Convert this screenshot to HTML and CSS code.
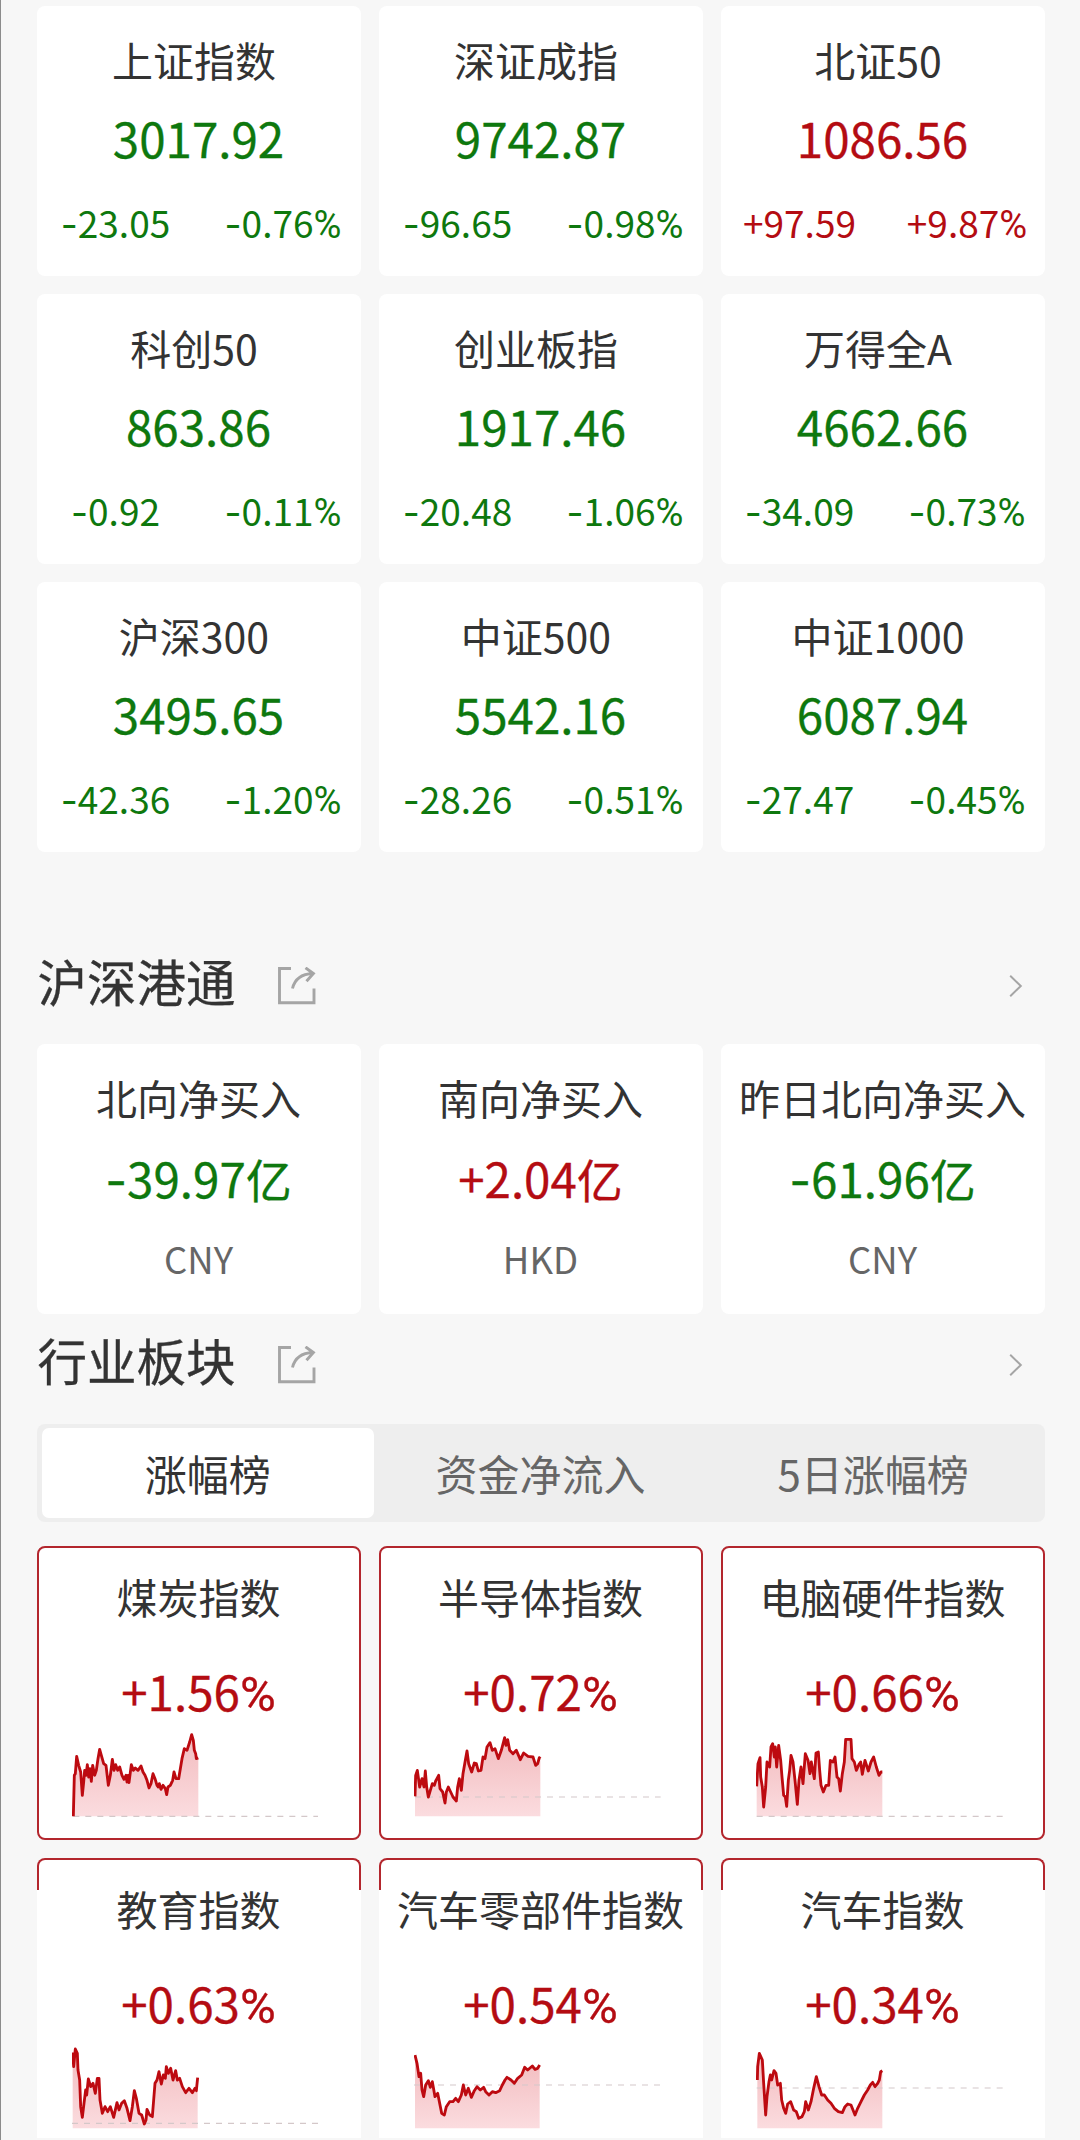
FILE: index.html
```html
<!DOCTYPE html>
<html lang="zh-CN">
<head>
<meta charset="utf-8">
<title>市场行情</title>
<link rel="stylesheet" href="styles.css">
</head>
<body>
<svg class="defs" width="0" height="0" aria-hidden="true">
  <defs>
    <linearGradient id="area" x1="0" y1="0" x2="0" y2="1">
      <stop offset="0" stop-color="#f2bbbe"/>
      <stop offset="1" stop-color="#fbdcdf"/>
    </linearGradient>
    <symbol id="share" viewBox="0 0 38 38">
      <path d="M13 1.5H1.5V35.7H36V21.5M14.5 21.5C16.5 13 23 7 35 6.5M27.5 .8L35.4 6.5L28.5 14.2"/>
    </symbol>
    <symbol id="chevron" viewBox="0 0 14 24">
      <path d="M1.2 1.8L11.8 12L1.2 22.2"/>
    </symbol>
  </defs>
</svg>
<main class="page">
  <section class="grid indices">
    <article class="card down"><h3 class="name">上证指数</h3><p class="value">3017.92</p><p class="change"><span><i class="minus">-</i>23.05</span><span><i class="minus">-</i>0.76<i class="pct">%</i></span></p></article>
    <article class="card down"><h3 class="name">深证成指</h3><p class="value">9742.87</p><p class="change"><span><i class="minus">-</i>96.65</span><span><i class="minus">-</i>0.98<i class="pct">%</i></span></p></article>
    <article class="card up"><h3 class="name">北证50</h3><p class="value">1086.56</p><p class="change"><span>+97.59</span><span>+9.87<i class="pct">%</i></span></p></article>
    <article class="card down"><h3 class="name">科创50</h3><p class="value">863.86</p><p class="change"><span><i class="minus">-</i>0.92</span><span><i class="minus">-</i>0.11<i class="pct">%</i></span></p></article>
    <article class="card down"><h3 class="name">创业板指</h3><p class="value">1917.46</p><p class="change"><span><i class="minus">-</i>20.48</span><span><i class="minus">-</i>1.06<i class="pct">%</i></span></p></article>
    <article class="card down"><h3 class="name">万得全A</h3><p class="value">4662.66</p><p class="change"><span><i class="minus">-</i>34.09</span><span><i class="minus">-</i>0.73<i class="pct">%</i></span></p></article>
    <article class="card down"><h3 class="name">沪深300</h3><p class="value">3495.65</p><p class="change"><span><i class="minus">-</i>42.36</span><span><i class="minus">-</i>1.20<i class="pct">%</i></span></p></article>
    <article class="card down"><h3 class="name">中证500</h3><p class="value">5542.16</p><p class="change"><span><i class="minus">-</i>28.26</span><span><i class="minus">-</i>0.51<i class="pct">%</i></span></p></article>
    <article class="card down"><h3 class="name">中证1000</h3><p class="value">6087.94</p><p class="change"><span><i class="minus">-</i>27.47</span><span><i class="minus">-</i>0.45<i class="pct">%</i></span></p></article>
  </section>

  <header class="heading heading-connect">
    <h2 class="title">沪深港通</h2>
    <svg class="share"><use href="#share"/></svg>
    <svg class="chevron"><use href="#chevron"/></svg>
  </header>
  <section class="grid">
    <article class="card flow down"><h3 class="name">北向净买入</h3><p class="value"><i class="minus">-</i>39.97<i class="unit">亿</i></p><p class="currency">CNY</p></article>
    <article class="card flow up"><h3 class="name">南向净买入</h3><p class="value">+2.04<i class="unit">亿</i></p><p class="currency">HKD</p></article>
    <article class="card flow down"><h3 class="name">昨日北向净买入</h3><p class="value"><i class="minus">-</i>61.96<i class="unit">亿</i></p><p class="currency">CNY</p></article>
  </section>

  <header class="heading heading-sector">
    <h2 class="title">行业板块</h2>
    <svg class="share"><use href="#share"/></svg>
    <svg class="chevron"><use href="#chevron"/></svg>
  </header>
  <nav class="tabs">
    <span class="tab active">涨幅榜</span>
    <span class="tab">资金净流入</span>
    <span class="tab">5日涨幅榜</span>
  </nav>

  <section class="grid">
    <article class="card sector up"><h3 class="name">煤炭指数</h3><p class="value">+1.56<i class="pct">%</i></p>
      <svg class="chart" viewBox="0 0 744 270"><path class="base" d="M4 253H738"/><polyline class="line" points="4,253 7,130 10,125 14,73 20,100 26,120 31,190 35,150 38,115 42,130 46,98 50,135 54,110 58,148 62,100 68,130 73,115 78,80 83,52 88,70 95,95 102,100 109,160 115,130 121,82 126,115 131,98 137,115 143,105 150,130 156,142 162,130 165,150 168,130 171,152 178,98 184,115 190,108 198,115 207,102 213,120 219,130 225,145 231,168 237,155 243,125 249,140 255,160 259,165 262,155 267,172 273,160 280,170 284,188 288,165 295,160 302,145 306,120 312,140 320,140 325,110 330,80 337,50 345,55 353,30 359,8 364,25 367,55 371,65 373,80 379,78"/></svg>
    </article>
    <article class="card sector up"><h3 class="name">半导体指数</h3><p class="value">+0.72<i class="pct">%</i></p>
      <svg class="chart" viewBox="0 0 744 270"><path class="base" d="M3 195H740"/><polyline class="line" points="3,193 5,130 10,115 17,165 24,140 30,165 34,117 38,165 43,195 49,175 55,155 61,160 65,147 74,130 78,170 86,180 93,213 97,180 103,165 110,180 117,195 127,207 131,165 136,140 142,175 147,125 154,85 159,57 164,95 173,120 181,93 187,95 193,117 201,115 207,75 213,80 219,45 228,32 235,55 243,50 253,80 262,55 272,17 276,40 281,23 287,55 297,65 307,55 319,83 329,63 342,73 357,75 365,100 371,95 376,77 379,80"/></svg>
    </article>
    <article class="card sector up"><h3 class="name">电脑硬件指数</h3><p class="value">+0.66<i class="pct">%</i></p>
      <svg class="chart" viewBox="0 0 744 270"><path class="base" d="M2 253H744"/><polyline class="line" points="2,163 6,95 12,77 14,135 19,165 23,225 29,165 33,90 41,105 45,45 50,35 55,75 58,45 62,105 68,40 74,85 78,135 83,190 88,195 92,223 97,145 101,115 105,70 111,90 117,145 124,217 129,145 135,105 141,155 148,65 156,85 162,125 166,90 175,140 180,63 187,60 191,115 195,160 202,180 210,160 218,160 223,85 231,90 237,75 243,135 248,140 253,177 259,125 265,90 269,22 285,22 288,80 295,90 301,115 309,97 314,90 319,127 327,85 337,117 345,90 353,75 361,105 369,130 375,120 379,120"/></svg>
    </article>
    <article class="card sector cut up"><h3 class="name">教育指数</h3><p class="value">+0.63<i class="pct">%</i></p>
      <svg class="chart" viewBox="0 0 744 270"><path class="base" d="M0 238H740"/><polyline class="line" points="2,25 5,68 10,15 16,28 18,78 23,108 26,188 31,220 36,178 41,138 44,153 49,105 56,128 63,118 70,148 76,103 81,103 84,168 91,208 99,188 107,203 115,188 125,220 135,176 141,198 149,178 157,170 165,193 174,230 181,188 187,140 193,163 201,208 209,213 217,240 222,228 225,196 233,213 241,218 245,168 249,118 255,108 261,83 268,120 274,93 280,103 283,68 289,88 296,73 303,108 311,80 316,108 323,103 331,128 341,146 351,133 361,146 369,133 373,140 377,101"/></svg>
    </article>
    <article class="card sector cut up"><h3 class="name">汽车零部件指数</h3><p class="value">+0.54<i class="pct">%</i></p>
      <svg class="chart" viewBox="0 0 744 270"><path class="base" d="M0 123H740"/><polyline class="line" points="3,33 9,58 15,98 20,88 24,138 29,158 35,123 43,110 49,130 55,113 63,158 71,148 77,178 83,208 91,213 97,188 107,173 117,173 125,163 133,173 142,153 148,123 155,153 163,133 172,160 181,140 189,128 199,138 209,130 215,143 225,153 235,143 245,146 257,140 265,123 273,108 279,100 291,108 301,118 311,103 323,93 332,70 341,78 355,66 363,76 371,73 377,63"/></svg>
    </article>
    <article class="card sector cut up"><h3 class="name">汽车指数</h3><p class="value">+0.34<i class="pct">%</i></p>
      <svg class="chart" viewBox="0 0 744 270"><path class="base" d="M2 132H742"/><polyline class="line" points="4,108 5,68 10,28 19,48 23,118 29,213 33,158 39,113 43,93 47,108 54,80 60,88 65,123 73,118 77,168 83,193 89,208 95,180 104,173 113,198 121,203 128,223 138,218 145,203 149,173 157,198 165,173 173,133 181,98 189,128 197,153 205,153 215,168 225,178 235,193 247,203 259,206 267,188 275,180 285,183 291,198 297,213 305,193 315,173 325,153 335,138 343,123 350,115 357,128 365,118 370,108 374,83 379,80"/></svg>
    </article>
  </section>
</main>
<script src="charts.js"></script>
</body>
</html>
```
FILE: charts.js
```js
// Shade the area between each price line and the bottom of its chart.
document.querySelectorAll('.chart').forEach((chart) => {
  const points = chart.querySelector('.line').getAttribute('points').split(' ');
  const startX = points[0].split(',')[0];
  const endX = points[points.length - 1].split(',')[0];
  const area = document.createElementNS('http://www.w3.org/2000/svg', 'polygon');
  area.setAttribute('class', 'fill');
  area.setAttribute('points', `${startX},253 ${points.join(' ')} ${endX},253`);
  chart.prepend(area);
});
```
FILE: styles.css
```css
* { box-sizing: border-box; margin: 0; padding: 0; }

body {
  height: 2140px;
  overflow: hidden;
  background: #f7f7f7;
  color: #333;
  font-family: "Noto Sans CJK SC", sans-serif;
}

.defs { display: block; }
i { font-style: normal; line-height: 0; }

.page {
  height: 2140px;
  overflow: hidden;
  padding: 6px 35px 0 35.5px;
  border-left: 1px solid #8c8c8c;
}

.grid {
  display: grid;
  grid-template-columns: repeat(3, 324px);
  gap: 18px;
}

.card {
  height: 270px;
  padding-top: 25px;
  border-radius: 8px;
  background: #fff;
  text-align: center;
  white-space: nowrap;
}

.name { font-size: 41px; font-weight: 400; line-height: 56px; }
.indices .name { padding-right: 9px; }
.value { margin-top: 21px; font-size: 47.5px; line-height: 60px; -webkit-text-stroke: .3px; }
.up .value, .up .change { color: #b40c12; }
.down .value, .down .change { color: #0e780e; }

.change {
  display: grid;
  grid-template-columns: 158px 166px;
  margin-top: 29px;
  font-size: 37px;
  line-height: 50px;
}
.change span:last-child { padding-left: 11px; }

.minus { font-family: Inter, sans-serif; }
.pct { font-family: Roboto, sans-serif; font-size: 1.03em; }
.unit { font-size: 46px; }

.flow .value { margin-top: 23px; }
.currency { margin-top: 26px; color: #666; font-size: 36.5px; line-height: 50px; }

.heading { display: flex; align-items: center; height: 64px; }
.heading-connect { margin: 98px 0 30px; }
.heading-sector { margin: 15px 0 31px; }
.title { width: 241px; margin-top: -3px; padding-left: 1px; font-size: 49.5px; font-weight: 400; line-height: 64px; -webkit-text-stroke: .3px; }
.share, .chevron { fill: none; stroke: #a5a5a5; }
.share { width: 38px; height: 38px; margin-top: 8px; stroke-width: 2.9; }
.chevron { width: 14px; height: 24px; margin: 8px 22px 0 auto; stroke-width: 2; }

.tabs {
  display: grid;
  grid-template-columns: repeat(3, 1fr);
  width: 1008px;
  height: 98px;
  margin-bottom: 24px;
  padding: 4px 5px;
  border-radius: 8px;
  background: #eee;
}
.tab { color: #666; font-size: 42px; line-height: 89px; text-align: center; }
.active { border-radius: 7px; background: #fff; color: #333; }

.sector { position: relative; height: 294px; padding-top: 20px; border: 2px solid #b3262d; }
.sector .value { margin-top: 37px; }
.chart { display: block; width: 248px; height: 90px; margin: 11px 0 0 33.5px; }
.fill { fill: url(#area); }
.line { fill: none; stroke: #bd0a10; stroke-width: 8.5; stroke-linejoin: round; }
.base { fill: none; stroke: #d4c8c9; stroke-width: 3.5; stroke-dasharray: 18 18; }

/* Second row: the outline stops below the corners and the card runs to the fold. */
.cut { height: 280px; padding: 22px 2px 0; border: 0; border-radius: 8px 8px 0 0; }
.cut::before {
  content: "";
  position: absolute;
  inset: 0 0 auto;
  height: 30px;
  border: 2px solid #b3262d;
  border-bottom: 0;
  border-radius: 8px 8px 0 0;
}
```
